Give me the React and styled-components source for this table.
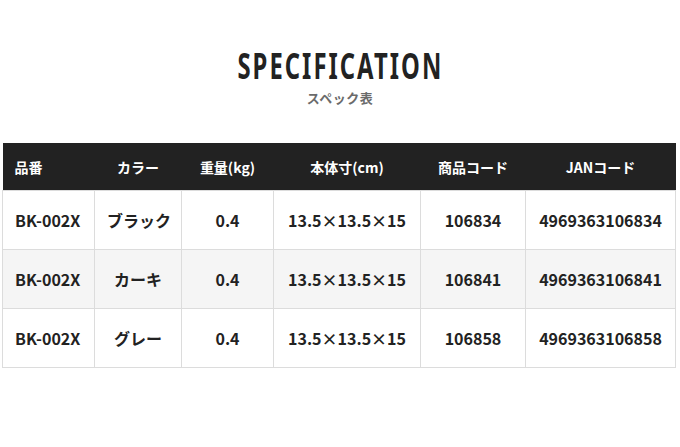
import React from 'react';
import styled, { createGlobalStyle } from 'styled-components';

const GlobalStyle = createGlobalStyle`
body {
  margin: 0;
  background: #fff;
  font-family: "Noto Sans CJK JP", "Noto Sans", sans-serif;
}
`
const Page = styled.div`
width: 680px;
height: 447px;
padding: 46px 5px 0 2px;
box-sizing: border-box;
`
const Heading = styled.div`
display: flex;
flex-direction: column;
align-items: center;
margin-bottom: 36px;
margin-left: 3px;
`
const Title = styled.h2`
margin: 0;
display: inline-block;
font-family: "Noto Sans", sans-serif;
font-weight: bold;
font-size: 35px;
line-height: 40px;
letter-spacing: 3px;
color: #222;
transform: scaleX(0.68);
`
const Sub = styled.span`
margin-top: 3px;
font-size: 13px;
font-weight: bold;
line-height: 18px;
color: #6b6b6b;
letter-spacing: 0.5px;
`
const Table = styled.table`
width: 673px;
border-collapse: collapse;
table-layout: fixed;
`
const Th = styled.th`
height: 47px;
padding: 0 12px;
background: #222;
color: #fff;
font-size: 14px;
font-weight: bold;
text-align: ${(props) => (props.left ? 'left' : 'center')};
`
const Td = styled.td`
height: 58px;
padding: 0 12px;
border: 1px solid #dcdcdc;
color: #222;
font-size: 16px;
font-weight: bold;
text-align: ${(props) => (props.left ? 'left' : 'center')};
white-space: nowrap;
`
const Tr = styled.tr`
background: ${(props) => (props.alt ? '#f5f5f5' : '#fff')};
`

const cols = [92, 87, 92, 147, 105, 150];
const heads = ['品番', 'カラー', '重量(kg)', '本体寸(cm)', '商品コード', 'JANコード'];
const rows = [
  ['BK-002X', 'ブラック', '0.4', '13.5×13.5×15', '106834', '4969363106834'],
  ['BK-002X', 'カーキ', '0.4', '13.5×13.5×15', '106841', '4969363106841'],
  ['BK-002X', 'グレー', '0.4', '13.5×13.5×15', '106858', '4969363106858'],
];

const App = () => {
  return (
    <Page>
      <GlobalStyle />
      <Heading>
        <Title>SPECIFICATION</Title>
        <Sub>スペック表</Sub>
      </Heading>
      <Table>
        <colgroup>
          {cols.map((w, i) => <col key={i} style={{ width: w }} />)}
        </colgroup>
        <thead>
          <tr>
            {heads.map((h, i) => <Th key={h} left={i === 0}>{h}</Th>)}
          </tr>
        </thead>
        <tbody>
          {rows.map((r, ri) => (
            <Tr key={ri} alt={ri === 1}>
              {r.map((c, i) => <Td key={i} left={i === 0}>{c}</Td>)}
            </Tr>
          ))}
        </tbody>
      </Table>
    </Page>
  );
}

export default App;
